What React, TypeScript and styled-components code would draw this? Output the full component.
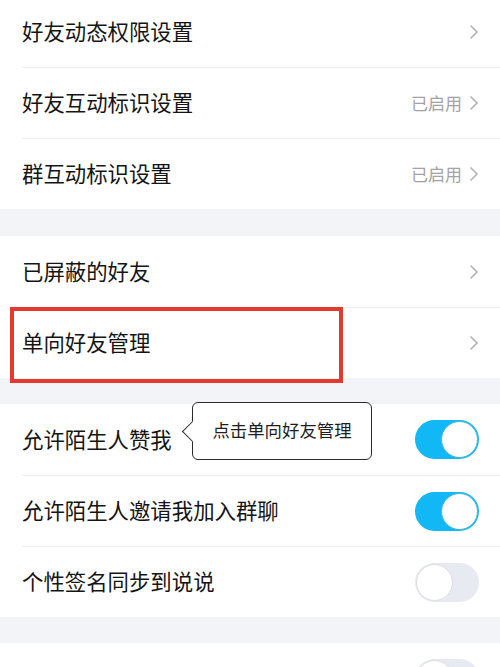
import React from "react";
import styled, { createGlobalStyle } from "styled-components";

const GlobalStyle = createGlobalStyle`
  html, body {
    margin: 0;
    padding: 0;
    background: #f3f4f7;
    font-family: "Noto Sans CJK SC", "Noto Sans", sans-serif;
  }
  * { box-sizing: border-box; }
`;

const Page = styled.div`
  width: 500px;
  height: 667px;
  overflow: hidden;
  display: flex;
  flex-direction: column;
`;

const Inner = styled.div`
  display: flex;
  flex-direction: column;
  margin-top: -4px;
`;

const Gap = styled.div<{ $h: number }>`
  height: ${(p) => p.$h}px;
`;

const Section = styled.div`
  position: relative;
  background: #ffffff;
  padding-left: 22px;
`;

const Row = styled.div`
  position: relative;
  height: 71px;
  display: flex;
  align-items: center;
  justify-content: space-between;
  padding-right: 21px;

  & + & {
    border-top: 1px solid #eeeff2;
  }
`;

const Label = styled.span`
  font-size: 21.4px;
  color: #141414;
  margin-bottom: 3px;
`;

const Right = styled.div`
  display: flex;
  align-items: center;
  gap: 7px;
`;

const Status = styled.span`
  font-size: 17px;
  color: #a3a3a3;
  margin-bottom: 2px;
`;

const Track = styled.div<{ $on: boolean }>`
  width: 64px;
  height: 39px;
  border-radius: 20px;
  background: ${(p) => (p.$on ? "#12b7f5" : "#e8eaf1")};
  display: flex;
  align-items: center;
  justify-content: ${(p) => (p.$on ? "flex-end" : "flex-start")};
  padding: 1px;
`;

const Knob = styled.div<{ $on: boolean }>`
  width: 37px;
  height: 37px;
  border-radius: 50%;
  background: #ffffff;
  border: 1.5px solid ${(p) => (p.$on ? "#3fb5dc" : "#dcdde2")};
`;

const Highlight = styled.div`
  position: absolute;
  top: -1px;
  left: -12px;
  width: 333px;
  height: 76px;
  border: 4px solid #e43a2e;
  pointer-events: none;
`;

const Bubble = styled.div`
  position: absolute;
  top: -2px;
  left: 192px;
  width: 180px;
  height: 58px;
  background: #ffffff;
  border: 1.5px solid #2b2b2b;
  border-radius: 6px;
  display: flex;
  align-items: center;
  justify-content: center;
  font-size: 17.4px;
  color: #1e1e1e;
  padding-bottom: 4px;
  z-index: 5;

  &::before {
    content: "";
    position: absolute;
    left: -8px;
    top: 21px;
    width: 14px;
    height: 14px;
    background: #ffffff;
    border-left: 1.5px solid #2b2b2b;
    border-bottom: 1.5px solid #2b2b2b;
    transform: rotate(45deg);
  }
`;

const Chevron = () => (
  <svg width="10" height="16" viewBox="0 0 10 16">
    <path
      d="M2 2 L8 8 L2 14"
      fill="none"
      stroke="#b3b3b3"
      strokeWidth="1.7"
      strokeLinecap="round"
      strokeLinejoin="round"
    />
  </svg>
);

const Toggle = ({ on }: { on: boolean }) => (
  <Track $on={on}>
    <Knob $on={on} />
  </Track>
);

const App = () => {
  return (
    <>
      <GlobalStyle />
      <Page>
        <Inner>
          <Section>
            <Row>
              <Label>好友动态权限设置</Label>
              <Right>
                <Chevron />
              </Right>
            </Row>
            <Row>
              <Label>好友互动标识设置</Label>
              <Right>
                <Status>已启用</Status>
                <Chevron />
              </Right>
            </Row>
            <Row>
              <Label>群互动标识设置</Label>
              <Right>
                <Status>已启用</Status>
                <Chevron />
              </Right>
            </Row>
          </Section>
          <Gap $h={27} />
          <Section>
            <Row>
              <Label>已屏蔽的好友</Label>
              <Right>
                <Chevron />
              </Right>
            </Row>
            <Row>
              <Label>单向好友管理</Label>
              <Right>
                <Chevron />
              </Right>
              <Highlight />
            </Row>
          </Section>
          <Gap $h={26} />
          <Section>
            <Bubble>点击单向好友管理</Bubble>
            <Row>
              <Label>允许陌生人赞我</Label>
              <Toggle on />
            </Row>
            <Row>
              <Label>允许陌生人邀请我加入群聊</Label>
              <Toggle on />
            </Row>
            <Row>
              <Label>个性签名同步到说说</Label>
              <Toggle on={false} />
            </Row>
          </Section>
          <Gap $h={26} />
          <Section>
            <Row>
              <Label></Label>
              <Toggle on={false} />
            </Row>
          </Section>
        </Inner>
      </Page>
    </>
  );
};

export default App;
